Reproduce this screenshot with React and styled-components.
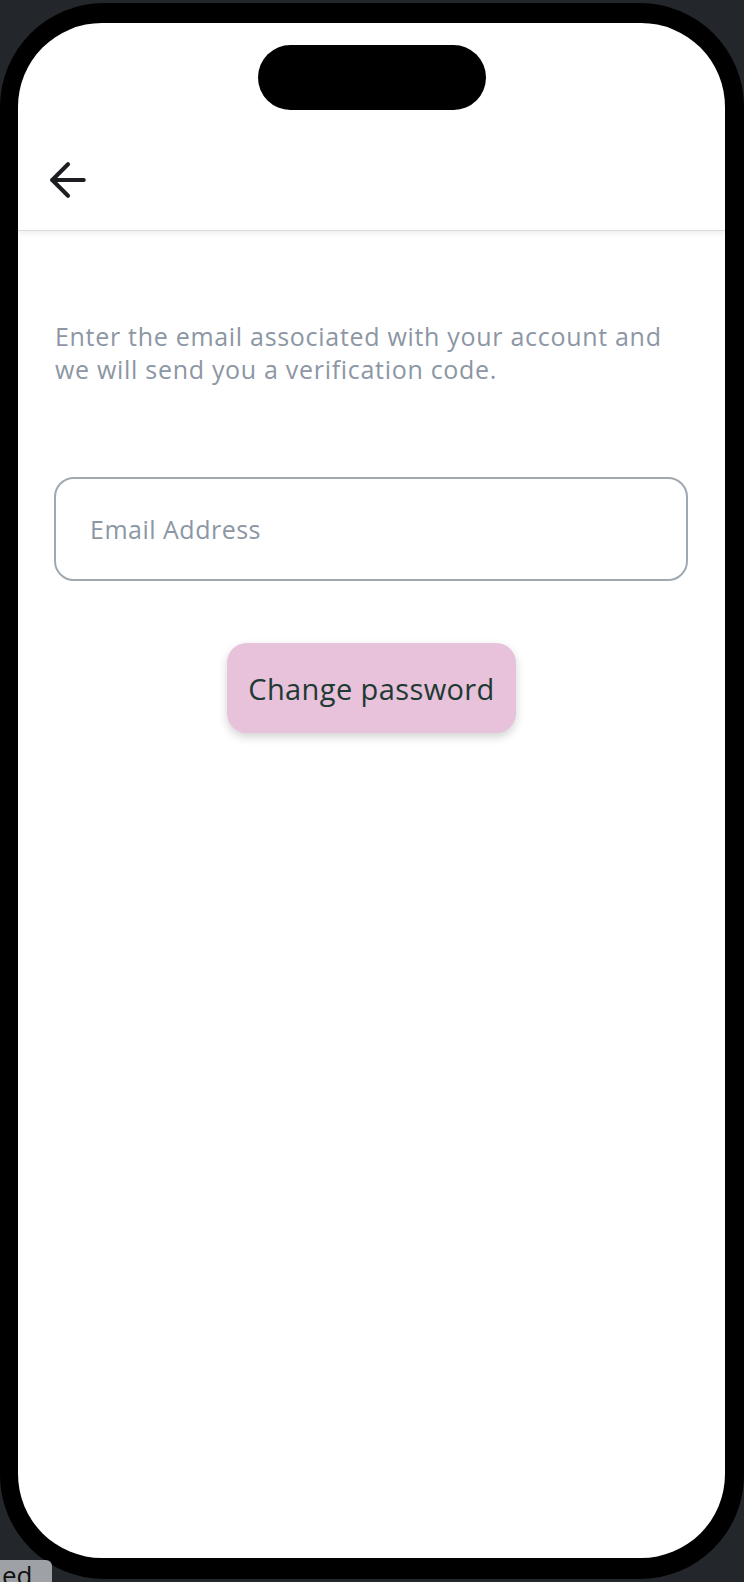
import React from 'react';
import styled, { createGlobalStyle } from 'styled-components';
import { ArrowLeft } from 'lucide-react';

const GlobalStyle = createGlobalStyle`
  html, body {
    margin: 0;
    padding: 0;
    background: #23262b;
    overflow: hidden;
  }
  body {
    font-family: 'Open Sans', 'Noto Sans', sans-serif;
  }
`;

const Stage = styled.div`
  width: 744px;
  height: 1582px;
  padding-top: 3px;
  box-sizing: border-box;
  position: relative;
`;

const Phone = styled.div`
  width: 744px;
  height: 1576px;
  box-sizing: border-box;
  background: #000;
  border-radius: 104px;
  padding: 20px 19px 21px 18px;
`;

const Screen = styled.div`
  position: relative;
  height: 100%;
  background: #fff;
  border-radius: 84px;
  overflow: hidden;
  display: flex;
  flex-direction: column;
`;

const Island = styled.div`
  position: absolute;
  top: 22px;
  left: 50%;
  transform: translateX(-50%);
  width: 228px;
  height: 65px;
  border-radius: 33px;
  background: #000;
`;

const Header = styled.header`
  height: 208px;
  flex-shrink: 0;
  display: flex;
  align-items: flex-end;
  padding: 0 0 23px 23px;
  box-sizing: border-box;
  border-bottom: 1px solid #dcdcde;
  box-shadow: 0 2px 6px rgba(0, 0, 0, 0.08);
`;

const BackButton = styled.button`
  border: 0;
  background: none;
  padding: 0;
  width: 54px;
  height: 54px;
  color: #1c1d21;
  display: flex;
  cursor: pointer;
`;

const Content = styled.main`
  padding: 89px 37px 0 36px;
  display: flex;
  flex-direction: column;
`;

const Intro = styled.p`
  margin: 0;
  padding-left: 1px;
  font-size: 25px;
  font-weight: 500;
  line-height: 33px;
  color: #8c96a4;
  letter-spacing: 0.7px;
  white-space: nowrap;
`;

const EmailInput = styled.input`
  margin-top: 91px;
  height: 104px;
  box-sizing: border-box;
  border: 2px solid #a0a8b2;
  border-radius: 20px;
  padding: 0 34px;
  font-family: inherit;
  font-size: 25px;
  font-weight: 500;
  letter-spacing: 0.5px;
  color: #333;
  outline: none;

  &::placeholder {
    color: #8c96a4;
  }
`;

const SubmitButton = styled.button`
  align-self: center;
  margin-top: 62px;
  margin-left: 1px;
  width: 289px;
  height: 90px;
  border: 0;
  border-radius: 20px;
  background: #e8c1db;
  color: #1e3a32;
  font-family: inherit;
  font-size: 29px;
  font-weight: 500;
  letter-spacing: 0.4px;
  box-shadow: 0 4px 10px rgba(0, 0, 0, 0.18);
  cursor: pointer;
`;

const Tab = styled.div`
  position: absolute;
  left: 0;
  bottom: 0;
  width: 52px;
  height: 22px;
  overflow: hidden;
  background: #9ea2a6;
  border-top-right-radius: 6px;
  font-size: 26px;
  line-height: 30px;
  color: #111;
  padding-left: 2px;
  box-sizing: border-box;
`;

export default function App() {
  return (
    <>
      <GlobalStyle />
      <Stage>
        <Phone>
          <Screen>
            <Island />
            <Header>
              <BackButton aria-label="Back">
                <ArrowLeft size={54} strokeWidth={1.8} />
              </BackButton>
            </Header>
            <Content>
              <Intro>
                Enter the email associated with your account and
                <br />
                we will send you a verification code.
              </Intro>
              <EmailInput type="email" placeholder="Email Address" />
              <SubmitButton>Change password</SubmitButton>
            </Content>
          </Screen>
        </Phone>
        <Tab>ed</Tab>
      </Stage>
    </>
  );
}
